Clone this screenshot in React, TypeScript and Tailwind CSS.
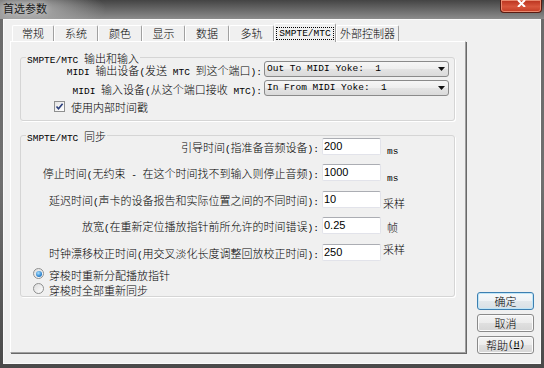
import React from 'react';

const CJK = /([\u2E80-\u9FFF\u3000-\u303F\uFF00-\uFFEF]+)/;

// SimSun-ish mix: CJK runs at 11px, latin runs in a narrow mono
function Tx({ s }: { s: string }) {
  return (
    <>
      {s.split(CJK).map((p, i) =>
        p === '' ? null : CJK.test(p) ? (
          <span key={i} className="[font-family:'Noto_Sans_CJK_SC',sans-serif] text-[11px] font-light">{p}</span>
        ) : (
          <span key={i} className="[font-family:'Liberation_Mono',monospace] text-[9.5px] whitespace-pre">{p}</span>
        )
      )}
    </>
  );
}

const tabs = [
  { t: '常规', w: 'w-[42px]' },
  { t: '系统', w: 'w-[44px]' },
  { t: '颜色', w: 'w-[44px]' },
  { t: '显示', w: 'w-[43px]' },
  { t: '数据', w: 'w-[44px]' },
  { t: '多轨', w: 'w-[45px]' },
];

function Select({ value }: { value: string }) {
  return (
    <div className="w-[185px] h-[16px] border border-[#8a8a8a] rounded-[3px] bg-[linear-gradient(180deg,#f6f6f6,#eeeeee_50%,#e4e4e4_50%,#dadada)] flex items-center justify-between pl-[2px] pr-[3px] leading-none">
      <Tx s={value} />
      <svg width="7" height="4" viewBox="0 0 7 4">
        <path d="M0 0h7L3.5 4z" fill="#111" />
      </svg>
    </div>
  );
}

function Field({ v }: { v: string }) {
  return (
    <div className="w-[59px] h-[17px] bg-white border border-[#e2e3ea] border-t-[#abadb3] rounded-[2px] flex items-center pl-[1px] [font-family:'Liberation_Sans',sans-serif] text-[11px] leading-none">
      {v}
    </div>
  );
}

function Radio({ on }: { on?: boolean }) {
  return (
    <div className="w-[11px] h-[11px] rounded-full border border-[#8e8f8f] bg-[linear-gradient(135deg,#dcdcdc,#ffffff)] flex items-center justify-center">
      {on && <div className="w-[6px] h-[6px] rounded-full bg-[radial-gradient(circle_at_40%_35%,#a8e0ff,#2a80cc_65%,#1a5aa0)]" />}
    </div>
  );
}

function Btn({ label, primary }: { label: React.ReactNode; primary?: boolean }) {
  return (
    <div
      className={
        primary
          ? 'h-[18px] w-[57px] rounded-[3px] border border-[#3c7fb1] bg-[linear-gradient(180deg,#f6f9fb,#eef2f5_50%,#e2e8ec_50%,#d8e0e6)] shadow-[inset_0_0_0_1px_#bfe5f7] flex items-center justify-center leading-none'
          : 'h-[18px] w-[57px] rounded-[3px] border border-[#8a8a8a] bg-[linear-gradient(180deg,#f4f4f4,#ececec_50%,#e0e0e0_50%,#d6d6d6)] shadow-[inset_0_0_0_1px_#fbfbfb] flex items-center justify-center leading-none'
      }
    >
      {label}
    </div>
  );
}

export default function App() {
  return (
    <div className="w-[544px] h-[368px] flex flex-col overflow-hidden text-black bg-[linear-gradient(180deg,#6a6a6a,#707070_50%,#4a4a4a)]">
      {/* title bar */}
      <div className="h-[19px] shrink-0 flex items-start justify-between bg-[radial-gradient(ellipse_80px_24px_at_26px_9px,#b4b4b4,transparent),linear-gradient(180deg,#444444,#8c8c8c)]">
        <span className="ml-[3px] mt-[3px] leading-none [font-family:'Noto_Sans_CJK_SC',sans-serif] text-[11px] text-[#1a1a1a] [text-shadow:0_0_6px_#d8d8d8]">首选参数</span>
        <div className="mr-[2px] w-[42px] h-[13px] rounded-b-[4px] border border-t-0 border-[#5a1a10] bg-[linear-gradient(180deg,#b8301c,#d8563c_55%,#c23a22)] shadow-[inset_0_0_0_1px_#e88a70] flex justify-center">
          <svg width="9" height="7" viewBox="0 0 9 7">
            <path d="M1 0L8 7M8 0L1 7" stroke="#fff" strokeWidth="2" />
          </svg>
        </div>
      </div>

      {/* body */}
      <div className="flex-1 px-[3px] pb-[4px]">
        <div className="w-[538px] h-[345px] border border-[#fafafa] bg-[#f0f0f0] flex">
          {/* tab control */}
          <div className="pl-[6px] pt-[3px] flex flex-col">
            <div className="h-[18px] flex items-end pl-[2px]">
              {tabs.map((t) => (
                <div key={t.t} className={`${t.w} h-[16px] flex items-center justify-center border-t border-l border-r border-t-white border-l-white border-r-[#a0a0a0] rounded-t-[2px] leading-none`}>
                  <Tx s={t.t} />
                </div>
              ))}
              <div className="w-[62px] h-[19px] -mb-px relative z-10 bg-[#f0f0f0] flex items-start justify-center pt-[3px] border-t border-l border-r border-t-white border-l-white border-r-[#a0a0a0] rounded-t-[2px] leading-none">
                <span className="h-[13px] px-[2px] flex items-center border border-dotted border-black">
                  <Tx s="SMPTE/MTC" />
                </span>
              </div>
              <div className="w-[63px] h-[16px] flex items-center justify-center border-t border-l border-r border-t-white border-l-white border-r-[#a0a0a0] rounded-t-[2px] leading-none">
                <Tx s="外部控制器" />
              </div>
            </div>

            <div className="w-[456px] h-[312px] border border-t-white border-l-white border-r-[#a0a0a0] border-b-[#a0a0a0] shadow-[1px_1px_0_#696969] pt-[11px] pl-[9px] flex flex-col">
              {/* group 1 */}
              <fieldset className="w-[435px] border border-[#d5d5d5] rounded-[3px] shadow-[1px_1px_0_#fff] pb-[7px]">
                <legend className="ml-[5px] px-[1px] h-[8px] leading-[8px]">
                  <Tx s="SMPTE/MTC 输出和输入" />
                </legend>
                <div className="flex items-center h-[16px]">
                  <div className="w-[243px] pr-[2px] text-right leading-none">
                    <Tx s="MIDI 输出设备(发送 MTC 到这个端口):" />
                  </div>
                  <Select value="Out To MIDI Yoke:  1" />
                </div>
                <div className="flex items-center h-[16px] mt-[3px]">
                  <div className="w-[243px] pr-[2px] text-right leading-none">
                    <Tx s="MIDI 输入设备(从这个端口接收 MTC):" />
                  </div>
                  <Select value="In From MIDI Yoke:  1" />
                </div>
                <div className="flex items-center h-[14px] mt-[3px] pl-[33px] leading-none">
                  <div className="w-[11px] h-[11px] border border-[#8e8f8f] bg-[linear-gradient(135deg,#e4e4e4,#ffffff)] flex items-center justify-center">
                    <svg width="9" height="9" viewBox="0 0 9 9">
                      <path d="M1.5 4.5L3.5 6.8L7.6 1.8" fill="none" stroke="#2b3f7c" strokeWidth="1.6" />
                    </svg>
                  </div>
                  <span className="ml-[6px]">
                    <Tx s="使用内部时间戳" />
                  </span>
                </div>
              </fieldset>

              {/* group 2 */}
              <fieldset className="w-[435px] mt-[11px] border border-[#d5d5d5] rounded-[3px] shadow-[1px_1px_0_#fff]">
                <legend className="ml-[5px] px-[1px] h-[6px] leading-[6px]">
                  <Tx s="SMPTE/MTC 同步" />
                </legend>

                <div className="flex items-center h-[17px] leading-none">
                  <div className="w-[301px] pr-[3px] text-right"><Tx s="引导时间(指准备音频设备):" /></div>
                  <Field v="200" />
                  <span className="ml-[6px] mt-[4px]"><Tx s="ms" /></span>
                </div>
                <div className="flex items-center h-[17px] mt-[9px] leading-none">
                  <div className="w-[301px] pr-[3px] text-right"><Tx s="停止时间(无约束 - 在这个时间找不到输入则停止音频):" /></div>
                  <Field v="1000" />
                  <span className="ml-[6px] mt-[6px]"><Tx s="ms" /></span>
                </div>
                <div className="flex items-center h-[17px] mt-[10px] leading-none">
                  <div className="w-[301px] pr-[3px] text-right"><Tx s="延迟时间(声卡的设备报告和实际位置之间的不同时间):" /></div>
                  <Field v="10" />
                  <span className="ml-[2px] mt-[5px]"><Tx s="采样" /></span>
                </div>
                <div className="flex items-center h-[17px] mt-[9px] leading-none">
                  <div className="w-[301px] pr-[3px] text-right"><Tx s="放宽(在重新定位播放指针前所允许的时间错误):" /></div>
                  <Field v="0.25" />
                  <span className="ml-[6px]"><Tx s="帧" /></span>
                </div>
                <div className="flex items-center h-[17px] mt-[10px] leading-none">
                  <div className="w-[301px] pr-[3px] text-right"><Tx s="时钟漂移校正时间(用交叉淡化长度调整回放校正时间):" /></div>
                  <Field v="250" />
                  <span className="ml-[2px] mb-[9px]"><Tx s="采样" /></span>
                </div>

                <div className="flex items-center h-[15px] mt-[5px] pl-[12px] leading-none">
                  <Radio on />
                  <span className="ml-[5px]"><Tx s="穿梭时重新分配播放指针" /></span>
                </div>
                <div className="flex items-center h-[15px] pl-[12px] leading-none">
                  <Radio />
                  <span className="ml-[5px]"><Tx s="穿梭时全部重新同步" /></span>
                </div>
              </fieldset>
            </div>
          </div>

          {/* buttons */}
          <div className="ml-[11px] pb-[9px] flex flex-col justify-end gap-[4px]">
            <Btn primary label={<Tx s="确定" />} />
            <Btn label={<Tx s="取消" />} />
            <Btn
              label={
                <>
                  <Tx s="帮助" />
                  <span className="[font-family:'Liberation_Mono',monospace] text-[9.5px]">
                    (<span className="underline">H</span>)
                  </span>
                </>
              }
            />
          </div>
        </div>
      </div>
    </div>
  );
}
